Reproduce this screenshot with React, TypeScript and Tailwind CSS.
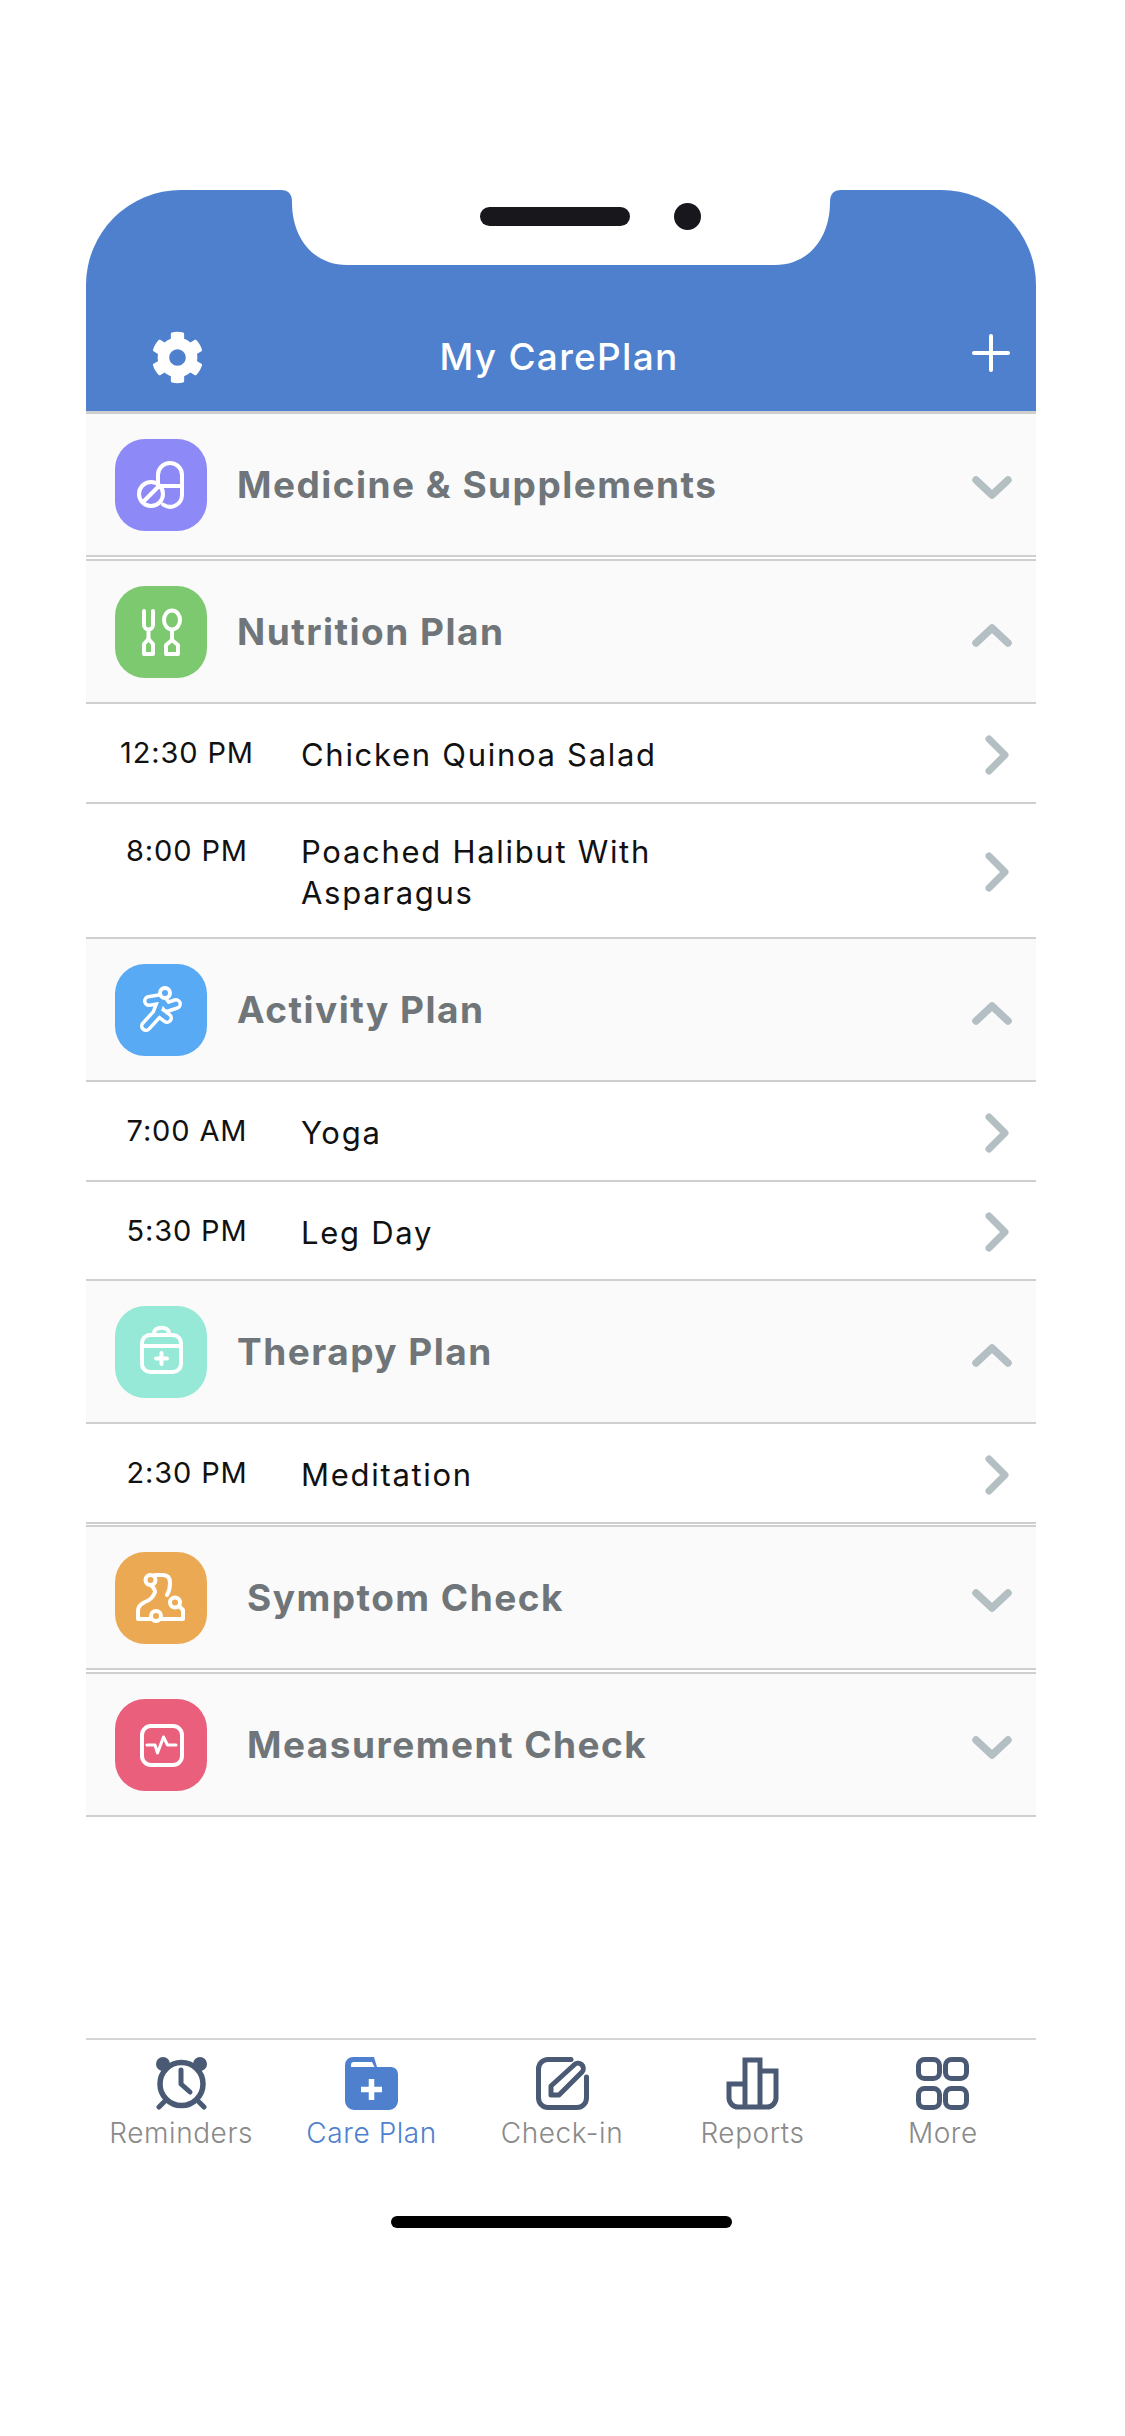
import { FaCog } from "react-icons/fa";

const font = { fontFamily: '"Inter", "Liberation Sans", sans-serif' };

function Tile({ color, children }: { color: string; children: React.ReactNode }) {
  return (
    <div className="w-[92px] h-[92px] rounded-[30px] shrink-0" style={{ backgroundColor: color }}>
      <svg width="92" height="92" viewBox="0 0 92 92" fill="none" stroke="white" strokeWidth="4" strokeLinecap="round" strokeLinejoin="round">
        {children}
      </svg>
    </div>
  );
}

function Chevron({ up }: { up?: boolean }) {
  return (
    <svg width="40" height="26" viewBox="0 0 40 26" fill="none" stroke="#b4bfc4" strokeWidth="7.5" strokeLinecap="round" strokeLinejoin="round">
      <path d={up ? "M4 21 L20 6 L36 21" : "M4 5 L20 20 L36 5"} />
    </svg>
  );
}

function RightChevron() {
  return (
    <svg width="26" height="40" viewBox="0 0 26 40" fill="none" stroke="#b4bfc4" strokeWidth="7" strokeLinecap="round" strokeLinejoin="round">
      <path d="M5 4 L21 20 L5 36" />
    </svg>
  );
}

function SectionHead({ label, tile, open, wide, gap }: { label: string; tile: React.ReactNode; open?: boolean; wide?: boolean; gap?: boolean }) {
  return (
    <div className={`h-[145px] shrink-0 bg-[#fafafa] border-y-2 border-[#cfcfcf] flex items-center pl-[29px] pr-[24px] ${gap ? "mt-[2px]" : ""}`}>
      {tile}
      <span className={`text-[37px] font-bold text-[#6f7578] tracking-[0.04em] ${wide ? "ml-[40px]" : "ml-[30px]"}`}>{label}</span>
      <span className="ml-auto flex pt-[6px]">
        <Chevron up={open} />
      </span>
    </div>
  );
}

function Item({ time, title, h, last }: { time: string; title: React.ReactNode; h: string; last?: boolean }) {
  const multi = typeof title !== "string";
  return (
    <div className={`flex shrink-0 items-center bg-white pr-[26px] ${h} ${last ? "" : "border-b-2 border-[#cfcfcf]"}`}>
      <div className={`w-[202px] text-center text-[29px] text-[#111] tracking-[0.03em] shrink-0 ${multi ? "self-start pt-[25px]" : ""}`}>{time}</div>
      <div className="pl-[13px] pt-[3px] text-[31px] leading-[41px] text-[#111] tracking-[0.055em]">{title}</div>
      <span className="ml-auto flex pt-[3px]">
        <RightChevron />
      </span>
    </div>
  );
}

function Tab({ label, active, children }: { label: string; active?: boolean; children: React.ReactNode }) {
  return (
    <div className="flex-1 flex flex-col items-center">
      <svg width="53" height="53" viewBox="0 0 53 53" fill="none" stroke={active ? "#4f80ce" : "#4b5a74"} strokeWidth="5" strokeLinecap="round" strokeLinejoin="round">
        {children}
      </svg>
      <span className={`text-[28px] leading-[36px] mt-[5px] font-light tracking-[0.02em] ${active ? "text-[#4f80ce]" : "text-[#8a8a8a]"}`}>{label}</span>
    </div>
  );
}

export default function App() {
  return (
    <div className="w-[1125px] h-[2436px] bg-white pt-[190px] pl-[86px] pr-[89px] flex flex-col relative" style={font}>
      <div className="h-[222px] border-b border-[#cfcfcf] bg-[#4f80ce] rounded-t-[95px] relative flex items-end pb-[27px] pl-[65px] pr-[25px] shrink-0">
        <svg className="absolute left-[195px] top-0" width="560" height="75" viewBox="0 0 560 75" fill="white">
          <path d="M0 0 Q11 0 11 12 C11 50 34 75 66 75 L494 75 C526 75 549 50 549 12 Q549 0 560 0 Z" />
        </svg>
        <div className="absolute left-[394px] top-[17px] w-[150px] h-[19px] rounded-full bg-[#18181c]" />
        <div className="absolute left-[588px] top-[13px] w-[27px] h-[27px] rounded-full bg-[#18181c]" />
        <FaCog className="text-white w-[53px] h-[53px] shrink-0" />
        <span className="flex-1 text-center text-white text-[37px] font-medium tracking-[0.035em] pr-[57px]">My CarePlan</span>
        <svg width="40" height="40" viewBox="0 0 40 40" className="mb-[11px] shrink-0" fill="white">
          <rect x="18" y="1" width="4" height="38" rx="2" />
          <rect x="1" y="18" width="38" height="4" rx="2" />
        </svg>
      </div>

      <SectionHead
        label="Medicine & Supplements"
        tile={
          <Tile color="#8d8af8">
            <path d="M43 45 V36 a12 12 0 0 1 24 0 V56 a12 12 0 0 1 -19 9.500" />
            <path d="M44 47 H67" />
            <circle cx="36" cy="55" r="12" />
            <path d="M29 62 L43 48" />
          </Tile>
        }
      />
      <SectionHead
        gap
        open
        label="Nutrition Plan"
        tile={
          <Tile color="#7dc970">
            <path d="M29 25 V39 a4.500 4.500 0 0 0 9 0 V25 M33.500 44 V53" />
            <path d="M29 68 V58 L33.500 53 L38 58 V68 Z" />
            <ellipse cx="57" cy="34" rx="8" ry="9.500" />
            <path d="M57 44 V54" />
            <path d="M51 68 V59 L57 54 L63 59 V68 Z" />
          </Tile>
        }
      />
      <Item h="h-[100px]" time="12:30 PM" title="Chicken Quinoa Salad" />
      <Item
        last
        h="h-[133px]"
        time="8:00 PM"
        title={
          <>
            Poached Halibut With
            <br />
            Asparagus
          </>
        }
      />
      <SectionHead
        open
        label="Activity Plan"
        tile={
          <Tile color="#57aaf3">
            <g stroke="white" strokeWidth="12">
              <path d="M34 37 L46 35 L52 43 L61 40" />
              <path d="M47 37 L42 50 L31 62" />
              <path d="M44 48 L52 54" />
            </g>
            <g stroke="#57aaf3" strokeWidth="5">
              <path d="M34 37 L46 35 L52 43 L61 40" />
              <path d="M47 37 L42 50 L31 62" />
              <path d="M44 48 L52 54" />
            </g>
            <circle cx="50" cy="29" r="5" fill="#57aaf3" />
          </Tile>
        }
      />
      <Item h="h-[100px]" time="7:00 AM" title="Yoga" />
      <Item last h="h-[97px]" time="5:30 PM" title="Leg Day" />
      <SectionHead
        open
        label="Therapy Plan"
        tile={
          <Tile color="#96e9d6">
            <rect x="27" y="29" width="39" height="37" rx="8" />
            <path d="M39 29 V27 a7 5 0 0 1 15 0 V29" />
            <path d="M27 40 H66" />
            <path d="M46.500 47 V58 M41 52.500 H52" />
          </Tile>
        }
      />
      <Item h="h-[100px]" time="2:30 PM" title="Meditation" />
      <div className="h-[1px] shrink-0" />
      <SectionHead
        wide
        label="Symptom Check"
        tile={
          <Tile color="#eca954">
            <path d="M40 23 H48 Q55 23 55 31 Q55 38 52 43 M64 54 L68 58 V67 H46 M36 67 H23 V59 Q23 53 30 50 Q38 47 40 40 Q40 37 36 33" />
            <circle cx="35.500" cy="28" r="5" />
            <circle cx="60" cy="50.500" r="5" />
            <circle cx="41" cy="64" r="5" />
          </Tile>
        }
      />
      <SectionHead
        gap
        wide
        label="Measurement Check"
        tile={
          <Tile color="#e95f7c">
            <rect x="27" y="27" width="40" height="39" rx="9" />
            <path d="M32 46 H40 L42.500 54 L48.500 38 L52.500 46 H61" strokeWidth="3" />
          </Tile>
        }
      />

      <div className="mt-[221px] border-t-2 border-[#d5d5d5] pt-[17px] shrink-0">
        <div className="flex -mr-[2px]">
          <Tab label="Reminders">
            <circle cx="26.500" cy="27" r="21.500" strokeWidth="5.500" />
            <path d="M26 13 V27 L35 35" />
            <circle cx="8" cy="7" r="7" fill="#4b5a74" stroke="none" />
            <circle cx="45" cy="7" r="7" fill="#4b5a74" stroke="none" />
            <path d="M9 45 L4 50 M44 45 L49 50" />
          </Tab>
          <Tab label="Care Plan" active>
            <path d="M0 8 a8 8 0 0 1 8 -8 H29 L32 10 H46 a7 7 0 0 1 7 7 V44 a9 9 0 0 1 -9 9 H9 a9 9 0 0 1 -9 -9 Z" fill="#4f80ce" stroke="none" />
            <path d="M6 10 V8 Q6 5 9 5 H27 L29.500 10 Z" fill="white" stroke="none" />
            <path d="M26.500 22 V43 M16 32.500 H37" stroke="white" strokeWidth="5.500" strokeLinecap="butt" />
          </Tab>
          <Tab label="Check-in">
            <path d="M35 2.500 H12 a9.500 9.500 0 0 0 -9.500 9.500 V41 a9.500 9.500 0 0 0 9.500 9.500 H41 a9.500 9.500 0 0 0 9.500 -9.500 V20" />
            <path d="M15 38 V29 L38 8 a5 5 0 0 1 8 7 L23 38 Z" />
          </Tab>
          <Tab label="Reports">
            <path d="M19 50 V3 H34 V50 M34 14 H50 V41 a9 9 0 0 1 -9 9 H12 a9 9 0 0 1 -9 -9 V27 H19" strokeLinecap="butt" strokeLinejoin="miter" />
          </Tab>
          <Tab label="More">
            <rect x="2.500" y="2.500" width="21" height="19" rx="6" />
            <rect x="29.500" y="2.500" width="21" height="19" rx="6" />
            <rect x="2.500" y="31.500" width="21" height="19" rx="6" />
            <rect x="29.500" y="31.500" width="21" height="19" rx="6" />
          </Tab>
        </div>
      </div>

      <div className="absolute left-[391px] top-[2216px] w-[341px] h-[12px] rounded-full bg-black" />
    </div>
  );
}
